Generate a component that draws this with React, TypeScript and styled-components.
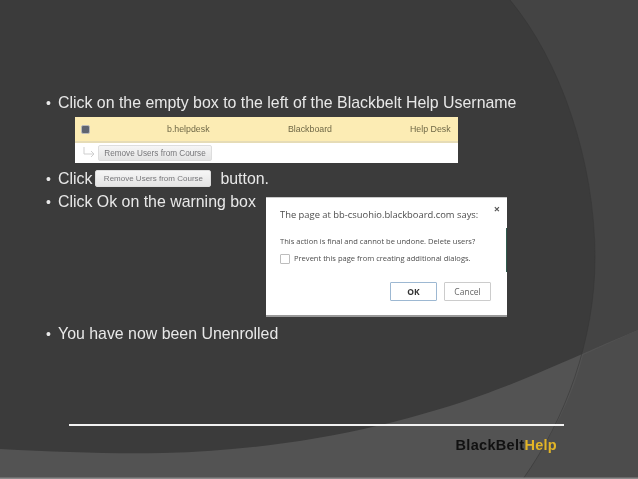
import styled, { createGlobalStyle } from 'styled-components';

const GlobalStyle = createGlobalStyle`
  html, body {
    margin: 0;
    padding: 0;
    background: #3b3b3b;
  }
`;

function Backdrop() {
  return (
    <BackdropSvg viewBox="0 0 638 479" aria-hidden="true">
      <rect width="638" height="479" fill="#3b3b3b" />
      <path d="M510 0 C560 60 595 160 595 258 C595 340 565 420 523 479 L638 479 L638 0 Z" fill="#444444" />
      <path
        d="M0 449 C60 452 110 454 163 453 C290 450 400 425 488 393 C530 378 590 350 638 330 L638 479 L0 479 Z"
        fill="#535353"
      />
      <path
        d="M583 355 C572 400 550 440 523 479 L638 479 L638 330 Z"
        fill="#4c4c4c"
      />
      <path
        d="M510 0 C560 60 595 160 595 258 C595 340 565 420 523 479"
        fill="none"
        stroke="#353535"
        strokeOpacity="0.55"
        strokeWidth="1"
      />
      <rect y="477.5" width="638" height="1.5" fill="#8a8a8a" />
    </BackdropSvg>
  );
}

function App() {
  return (
    <>
      <GlobalStyle />
      <Slide>
        <Backdrop />
        <Content>
          <Bullet>Click on the empty box to the left of the Blackbelt Help Username</Bullet>
          <UserShot>
            <UserRow>
              <FakeCheck checked />
              <RowCell>b.helpdesk</RowCell>
              <RowCell>Blackboard</RowCell>
              <RowCell>Help Desk</RowCell>
            </UserRow>
            <ActionRow>
              <svg width="14" height="12" viewBox="0 0 14 12" aria-hidden="true">
                <path d="M2 0 V7 H12 M9 4 L12 7 L9 10" fill="none" stroke="#cfcfcf" strokeWidth="1" />
              </svg>
              <ShotButton>Remove Users from Course</ShotButton>
            </ActionRow>
          </UserShot>
          <ClickRow>
            <Bullet>Click</Bullet>
            <InlineShotButton>Remove Users from Course</InlineShotButton>
            <ButtonWord>button.</ButtonWord>
          </ClickRow>
          <WarningRow>
            <Bullet>Click Ok on the warning box</Bullet>
            <Dialog>
              <CloseMark>×</CloseMark>
              <DialogTitle>The page at bb-csuohio.blackboard.com says:</DialogTitle>
              <DialogText>This action is final and cannot be undone. Delete users?</DialogText>
              <PreventRow>
                <EmptyCheck />
                <DialogText>Prevent this page from creating additional dialogs.</DialogText>
              </PreventRow>
              <DialogActions>
                <DialogButton primary>OK</DialogButton>
                <DialogButton>Cancel</DialogButton>
              </DialogActions>
            </Dialog>
          </WarningRow>
          <Bullet>You have now been Unenrolled</Bullet>
        </Content>
        <Footer>
          <Rule />
          <Brand>
            BlackBelt<BrandAccent>Help</BrandAccent>
          </Brand>
        </Footer>
      </Slide>
    </>
  );
}

export default App;

const Slide = styled.div`
  position: relative;
  width: 638px;
  height: 479px;
  overflow: hidden;
  display: flex;
  flex-direction: column;
  font-family: 'Liberation Sans', Arial, sans-serif;
`;

const BackdropSvg = styled.svg`
  position: absolute;
  inset: 0;
  width: 638px;
  height: 479px;
  filter: blur(0.5px);
`;

const Content = styled.div`
  position: relative;
  flex: 1;
  display: flex;
  flex-direction: column;
  align-items: flex-start;
  padding: 94px 0 0 46px;
`;

const Bullet = styled.div`
  position: relative;
  padding-left: 12px;
  color: #e8e8e8;
  font-size: 15.9px;
  line-height: 18px;
  white-space: nowrap;
  filter: blur(0.25px);

  &::before {
    content: '•';
    position: absolute;
    left: 0;
    top: 0;
    font-size: 14px;
  }
`;

const UserShot = styled.div`
  margin: 5px 0 0 29px;
  width: 383px;
  height: 46px;
  display: flex;
  flex-direction: column;
  background: #ffffff;
  filter: blur(0.4px);
`;

const UserRow = styled.div`
  height: 24px;
  display: grid;
  grid-template-columns: 86px 121px 122px 1fr;
  align-items: center;
  padding-left: 6px;
  background: #fcecb4;
  border-bottom: 2px solid #e6dcb6;
`;

const FakeCheck = styled.span<{ checked?: boolean }>`
  width: 7px;
  height: 7px;
  border-radius: 2px;
  border: 1px solid #bbbbbb;
  background: ${(p) => (p.checked ? '#5f6470' : '#ffffff')};
`;

const RowCell = styled.span`
  color: #6f6847;
  font-size: 8.8px;
`;

const ActionRow = styled.div`
  flex: 1;
  display: flex;
  align-items: center;
  gap: 2px;
  padding-left: 7px;
`;

const ShotButton = styled.span`
  width: 114px;
  height: 16px;
  display: flex;
  align-items: center;
  justify-content: center;
  border: 1px solid #dddddd;
  border-radius: 2px;
  background: linear-gradient(#f6f6f6, #e4e4e4);
  color: #77777a;
  font-size: 8.2px;
  box-sizing: border-box;
`;

const ClickRow = styled.div`
  display: flex;
  align-items: center;
  margin-top: 7px;
  height: 17px;
`;

const InlineShotButton = styled(ShotButton)`
  width: 116px;
  height: 17px;
  margin-left: 3px;
  font-size: 8px;
  filter: blur(0.4px);
`;

const ButtonWord = styled.span`
  margin-left: 9px;
  color: #e8e8e8;
  font-size: 15.9px;
  filter: blur(0.25px);
`;

const WarningRow = styled.div`
  display: flex;
  align-items: flex-start;
  margin-top: 10px;
  height: 128px;

  & > ${Bullet} {
    margin-top: -4px;
    width: 220px;
    box-sizing: border-box;
  }
`;

const Dialog = styled.div`
  position: relative;
  width: 241px;
  height: 120px;
  box-sizing: border-box;
  display: flex;
  flex-direction: column;
  padding: 10px 14px 0;
  background: #ffffff;
  border-top: 1px solid #c9c9c9;
  border-bottom: 2px solid #9a9a9a;
  font-family: 'Open Sans', 'Liberation Sans', sans-serif;
  filter: blur(0.35px);

  &::after {
    content: '';
    position: absolute;
    right: 0;
    top: 30px;
    width: 1px;
    height: 44px;
    background: #2f5a4c;
  }
`;

const CloseMark = styled.span`
  position: absolute;
  right: 7px;
  top: 3px;
  color: #555555;
  font-size: 11px;
  font-weight: 700;
`;

const DialogTitle = styled.div`
  color: #4d4d4d;
  font-size: 9.4px;
  line-height: 14px;
  white-space: nowrap;
`;

const DialogText = styled.div`
  margin-top: 0;
  color: #4d4d4d;
  font-size: 7.55px;
  line-height: 11px;
  white-space: nowrap;

  ${DialogTitle} + & {
    margin-top: 14px;
  }
`;

const PreventRow = styled.div`
  display: flex;
  align-items: center;
  gap: 4px;
  margin-top: 6px;
`;

const EmptyCheck = styled.span`
  width: 10px;
  height: 10px;
  box-sizing: border-box;
  border: 1px solid #bdbdbd;
  border-radius: 1px;
  background: #ffffff;
`;

const DialogActions = styled.div`
  display: flex;
  justify-content: flex-end;
  gap: 7px;
  margin-top: 18px;
  padding-right: 2px;
`;

const DialogButton = styled.span<{ primary?: boolean }>`
  width: 47px;
  height: 19px;
  box-sizing: border-box;
  display: flex;
  align-items: center;
  justify-content: center;
  border: 1px solid ${(p) => (p.primary ? '#9db8d2' : '#cccccc')};
  border-radius: 1px;
  background: #ffffff;
  color: ${(p) => (p.primary ? '#333333' : '#666666')};
  font-size: 8.5px;
  font-weight: ${(p) => (p.primary ? 700 : 400)};
`;

const Footer = styled.div`
  position: relative;
  display: flex;
  flex-direction: column;
  padding: 0 0 26px 69px;
`;

const Rule = styled.div`
  width: 495px;
  height: 2px;
  background: #f2f2f2;
`;

const Brand = styled.div`
  align-self: flex-end;
  margin: 11px 81px 0 0;
  color: #111111;
  font-size: 14.5px;
  font-weight: 700;
  line-height: 16px;
  letter-spacing: 0.3px;
  filter: blur(0.25px);
`;

const BrandAccent = styled.span`
  color: #e3b526;
`;
